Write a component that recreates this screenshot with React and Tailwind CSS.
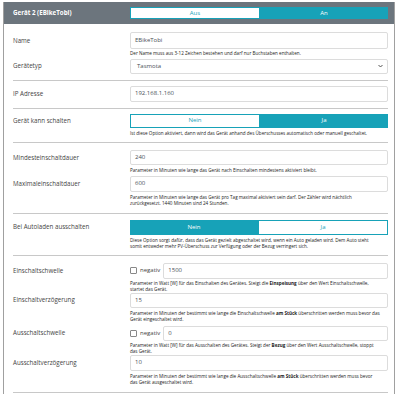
import React from "react";

const Label = ({ children }) => (
  <div className="w-[126px] shrink-0 pl-[9px] text-[6.2px] text-[#444]">{children}</div>
);

const Input = ({ value, h = "h-[16px]" }) => (
  <div className={`${h} flex-1 border border-[#dcdcdc] rounded-[2px] bg-white flex items-center pl-[4px] text-[6px] text-[#495057]`}>
    {value}
  </div>
);

const Help = ({ children, mt = "mt-[2px]" }) => (
  <div className={`${mt} ml-[126px] w-[250px] text-[4.6px] leading-[6.5px] text-[#222]`}>{children}</div>
);

const Hr = ({ mt }) => <div className={`${mt} ml-[9px] mr-[6px] h-[1px] bg-[#c8c8c8]`} />;

const Toggle = ({ left, right, active, h = "h-[14px]" }) => (
  <div className={`flex-1 flex ${h} text-[6px]`}>
    <div
      className={`flex-1 flex items-center justify-center ${
        active === 0 ? "bg-[#17a2b8] text-white" : "bg-white text-[#17a2b8] border border-[#17a2b8]"
      }`}
    >
      {left}
    </div>
    <div
      className={`flex-1 flex items-center justify-center ${
        active === 1 ? "bg-[#17a2b8] text-white" : "bg-white text-[#17a2b8] border border-[#17a2b8]"
      }`}
    >
      {right}
    </div>
  </div>
);

const Row = ({ label, children, mt }) => (
  <div className={`${mt} flex items-center pr-[6px]`}>
    <Label>{label}</Label>
    <div className="flex-1 flex items-center">{children}</div>
  </div>
);

export default function App() {
  return (
    <div className="w-[400px] h-[394px] bg-white overflow-hidden" style={{ fontFamily: '"Open Sans", sans-serif' }}>
      <div className="ml-[3px] mt-[2px] w-[392px] h-[400px] border-l border-r border-[#a0a0a0] bg-white">
        <div className="h-[22px] bg-[#6c757d] flex items-center pr-[6px]">
          <div className="w-[126px] shrink-0 pl-[9px] text-[6.2px] font-bold text-white">Gerät 2 (EBikeTobi)</div>
          <Toggle left="Aus" right="An" active={1} h="h-[12px]" />
        </div>

        <Row label="Name" mt="mt-[8px]">
          <Input value="EBikeTobi" h="h-[17px]" />
        </Row>
        <Help mt="mt-[1px]">Der Name muss aus 3-12 Zeichen bestehen und darf nur Buchstaben enthalten.</Help>
        <Row label="Gerätetyp" mt="mt-[2px]">
          <div className="h-[15px] flex-1 border border-[#dcdcdc] rounded-[2px] bg-white flex items-center justify-between pl-[6px] pr-[4px] text-[6px] text-[#495057]">
            <span>Tasmota</span>
            <svg width="5" height="4" viewBox="0 0 10 8"><path d="M1 2 L5 6 L9 2" fill="none" stroke="#444" strokeWidth="1.8" /></svg>
          </div>
        </Row>
        <Hr mt="mt-[6px]" />

        <Row label="IP Adresse" mt="mt-[5px]">
          <Input value="192.168.1.160" h="h-[16px]" />
        </Row>
        <Hr mt="mt-[6px]" />

        <Row label="Gerät kann schalten" mt="mt-[5px]">
          <Toggle left="Nein" right="Ja" active={1} />
        </Row>
        <Help mt="mt-[2px]">Ist diese Option aktiviert, dann wird das Gerät anhand des Überschusses automatisch oder manuell geschaltet.</Help>
        <Hr mt="mt-[6px]" />

        <Row label="Mindesteinschaltdauer" mt="mt-[7px]">
          <Input value="240" h="h-[15px]" />
        </Row>
        <Help mt="mt-[2px]">Parameter in Minuten wie lange das Gerät nach Einschalten mindestens aktiviert bleibt.</Help>
        <Row label="Maximaleinschaltdauer" mt="mt-[2px]">
          <Input value="600" h="h-[16px]" />
        </Row>
        <Help mt="mt-[2px]">Parameter in Minuten wie lange das Gerät pro Tag maximal aktiviert sein darf. Der Zähler wird nächtlich zurückgesetzt. 1440 Minuten sind 24 Stunden.</Help>
        <Hr mt="mt-[6px]" />

        <Row label="Bei Autoladen ausschalten" mt="mt-[6px]">
          <Toggle left="Nein" right="Ja" active={0} h="h-[15px]" />
        </Row>
        <Help mt="mt-[2px]">Diese Option sorgt dafür, dass das Gerät gezielt abgeschaltet wird, wenn ein Auto geladen wird. Dem Auto steht somit entweder mehr PV-Überschuss zur Verfügung oder der Bezug verringert sich.</Help>
        <Hr mt="mt-[5px]" />

        <Row label="Einschaltschwelle" mt="mt-[7px]">
          <div className="flex items-center gap-[3px] mr-[3px] text-[6px] text-[#444]">
            <div className="w-[7px] h-[7px] border border-[#888] rounded-[1px] bg-white" />
            <span>negativ</span>
          </div>
          <Input value="1500" h="h-[16px]" />
        </Row>
        <Help mt="mt-[1px]">
          Parameter in Watt [W] für das Einschalten des Gerätes. Steigt die <b>Einspeisung</b> über den Wert Einschaltschwelle, startet das Gerät.
        </Help>
        <Row label="Einschaltverzögerung" mt="mt-[0px]">
          <Input value="15" h="h-[15px]" />
        </Row>
        <Help mt="mt-[2px]">
          Parameter in Minuten der bestimmt wie lange die Einschaltschwelle <b>am Stück</b> überschritten werden muss bevor das Gerät eingeschaltet wird.
        </Help>
        <Row label="Ausschaltschwelle" mt="mt-[3px]">
          <div className="flex items-center gap-[3px] mr-[3px] text-[6px] text-[#444]">
            <div className="w-[7px] h-[7px] border border-[#888] rounded-[1px] bg-white" />
            <span>negativ</span>
          </div>
          <Input value="0" h="h-[15px]" />
        </Row>
        <Help mt="mt-[1px]">
          Parameter in Watt [W] für das Ausschalten des Gerätes. Steigt der <b>Bezug</b> über den Wert Ausschaltschwelle, stoppt das Gerät.
        </Help>
        <Row label="Ausschaltverzögerung" mt="mt-[0px]">
          <Input value="10" h="h-[16px]" />
        </Row>
        <Help mt="mt-[2px]">
          Parameter in Minuten der bestimmt wie lange die Ausschaltschwelle <b>am Stück</b> überschritten werden muss bevor das Gerät ausgeschaltet wird.
        </Help>
        <Hr mt="mt-[6px]" />
      </div>
    </div>
  );
}
